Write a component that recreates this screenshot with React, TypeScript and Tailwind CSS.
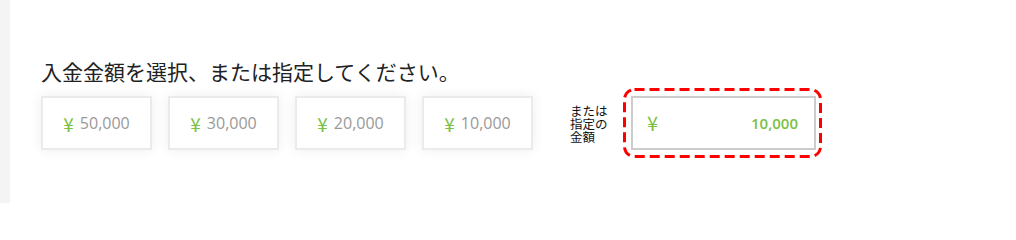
const AMOUNTS = ['50,000', '30,000', '20,000', '10,000']

export default function App() {
  return (
    <div className="flex h-[203px] w-[1016px] bg-white" style={{ fontFamily: '"Open Sans", "Noto Sans CJK JP", sans-serif' }}>
      {/* left edge */}
      <div className="w-[10px] shrink-0 bg-[#f4f4f4]" />

      <div className="pl-[31px] pt-[56px]">
        <h2 className="text-[21px] leading-[30px] text-[#222]" style={{ fontFamily: '"Noto Sans CJK JP", sans-serif' }}>
          入金金額を選択、または指定してください。
        </h2>

        <div className="mt-[2px] flex items-center">
          <div className="flex gap-[16px]">
            {AMOUNTS.map(a => (
              <button
                key={a}
                className="flex h-[54px] w-[111px] items-center justify-center border-2 border-[#ebebeb] bg-white text-[16px] text-[#999] shadow-[0_0_12px_rgba(0,0,0,0.07)]"
              >
                <span className="mr-[6px] text-[19px] leading-none text-[#7cc143]" style={{ fontFamily: '"Noto Sans CJK JP", sans-serif' }}>¥</span>
                {a}
              </button>
            ))}
          </div>

          <p
            className="ml-[37px] w-[42px] text-[12.5px] leading-[13px] text-[#111]"
            style={{ fontFamily: '"Noto Sans CJK JP", sans-serif' }}
          >
            または指定の金額
          </p>

          <div className="relative ml-[11px] py-[8px] pl-[8px] pr-[6px]">
            <svg className="pointer-events-none absolute inset-0 h-full w-full" viewBox="0 0 199 70" preserveAspectRatio="none">
              <rect x="1.5" y="1.5" width="196" height="67" rx="10" fill="none" stroke="#ff0000" strokeWidth="3" strokeDasharray="10 5" />
            </svg>
            <div className="flex h-[54px] w-[185px] items-center border-2 border-[#cccccc] bg-white pl-[14px] pr-[16px]">
              <span className="text-[20px] leading-none text-[#7cc143]" style={{ fontFamily: '"Noto Sans CJK JP", sans-serif' }}>¥</span>
              <span className="ml-auto text-[15px] font-semibold text-[#7cc143]">10,000</span>
            </div>
          </div>
        </div>
      </div>
    </div>
  )
}
